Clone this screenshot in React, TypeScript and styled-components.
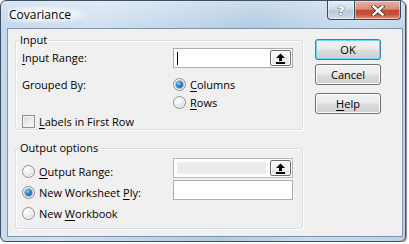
import styled, { createGlobalStyle } from "styled-components";

const UI_FONT = `"Open Sans", "Noto Sans", "DejaVu Sans", sans-serif`;

const GlobalStyle = createGlobalStyle`
  html, body {
    margin: 0;
    padding: 0;
    background: #ffffff;
  }
  body {
    font-family: ${UI_FONT};
    font-size: 11px;
    color: #000000;
  }
  * {
    box-sizing: border-box;
  }
`;

const Window = styled.div`
  width: 406px;
  height: 242px;
  display: flex;
  flex-direction: column;
  border: 1px solid #3f5063;
  border-radius: 6px;
  background: linear-gradient(
      180deg,
      rgba(255, 255, 255, 0.35) 0%,
      rgba(255, 255, 255, 0) 12%
    ),
    linear-gradient(
      100deg,
      #c2d7ec 0%,
      #d0e0f0 22%,
      #bdd2e8 45%,
      #b0c9e2 58%,
      #c7daee 78%,
      #bcd2e9 100%
    );
  box-shadow: 1px 1px 1px rgba(0, 0, 0, 0.45);
`;

const TitleBar = styled.div`
  height: 27px;
  display: flex;
  justify-content: space-between;
  align-items: flex-start;
  padding: 0 4px 0 7px;
`;

const Title = styled.span`
  margin-top: 5px;
  padding: 1px 16px 1px 1px;
  font-size: 12px;
  line-height: 15px;
  background: radial-gradient(
    ellipse at 40% 50%,
    rgba(255, 255, 255, 0.8) 35%,
    rgba(255, 255, 255, 0) 78%
  );
`;

const CaptionButtons = styled.div`
  display: flex;
`;

const CaptionButton = styled.div<{ $variant: "help" | "close" }>`
  width: ${(p) => (p.$variant === "close" ? "46px" : "28px")};
  height: 19px;
  display: flex;
  align-items: center;
  justify-content: center;
  border: 1px solid #3b4b5e;
  border-top: none;
  border-left-width: ${(p) => (p.$variant === "close" ? "0" : "1px")};
  border-radius: ${(p) =>
    p.$variant === "close" ? "0 0 4px 0" : "0 0 0 4px"};
  box-shadow: inset 0 0 0 1px rgba(255, 255, 255, 0.45);
  background: ${(p) =>
    p.$variant === "close"
      ? "linear-gradient(180deg, #e8b1a5 0%, #d98c78 45%, #c6472f 52%, #c9503a 75%, #e29378 100%)"
      : "linear-gradient(180deg, #e4ebf3 0%, #d1dce8 45%, #b8c8da 52%, #c2d2e3 80%, #d6e2ee 100%)"};
`;

const HelpGlyph = styled.span`
  font-family: "DejaVu Sans", sans-serif;
  font-weight: bold;
  font-size: 13px;
  line-height: 13px;
  color: #ffffff;
  -webkit-text-stroke: 0.7px #3a4656;
  paint-order: stroke fill;
`;

const Client = styled.div`
  flex: 1;
  margin: 0 2px 4px 6px;
  border: 1px solid #8193a7;
  background: #f0f0f0;
  display: flex;
  gap: 12px;
  padding: 10px 0 0 7px;
`;

const Groups = styled.div`
  width: 288px;
  padding-top: 1px;
  display: flex;
  flex-direction: column;
  gap: 18px;
`;

const Group = styled.div`
  position: relative;
  border: 1px solid #d5dfe5;
  border-radius: 3px;
  box-shadow: inset 1px 1px 0 #ffffff, 1px 1px 0 #ffffff;
`;

const Legend = styled.span`
  position: absolute;
  top: -9px;
  left: 3px;
  padding: 0 1px;
  background: #f0f0f0;
  line-height: 15px;
`;

const InputGrid = styled.div`
  display: grid;
  grid-template-columns: 151px 120px;
  padding: 7px 0 0 6px;
`;

const OutputGrid = styled.div`
  display: grid;
  grid-template-columns: 151px 120px;
  padding: 0 0 4px 6px;
`;

const Label = styled.div<{ $mt?: number }>`
  height: 20px;
  line-height: 20px;
  margin-top: ${(p) => p.$mt ?? 0}px;
  white-space: nowrap;
`;

const RadioList = styled.div<{ $top: number }>`
  display: flex;
  flex-direction: column;
  padding-top: ${(p) => p.$top}px;
`;

const FieldList = styled.div`
  display: flex;
  flex-direction: column;
  gap: 2px;
  padding-top: 9px;
`;

const OptionRow = styled.label<{ $h: number }>`
  height: ${(p) => p.$h}px;
  display: flex;
  align-items: center;
  gap: 4px;
  white-space: nowrap;
`;

const RadioMark = styled.span<{ $checked?: boolean }>`
  width: 13px;
  height: 13px;
  flex: none;
  border-radius: 50%;
  border: 1px solid #8e8f8f;
  display: flex;
  align-items: center;
  justify-content: center;
  background: radial-gradient(
    circle at 35% 30%,
    #ffffff 0%,
    #f2f2f2 35%,
    #d3d3d3 100%
  );
  box-shadow: inset 0 0 0 1px rgba(255, 255, 255, 0.6);

  &::after {
    content: "";
    display: ${(p) => (p.$checked ? "block" : "none")};
    width: 7px;
    height: 7px;
    border-radius: 50%;
    background: radial-gradient(
      circle at 40% 35%,
      #8fd4ff 0%,
      #2a8ad4 40%,
      #0d4f86 100%
    );
    box-shadow: 0 0 0 1px rgba(30, 90, 140, 0.35);
  }
`;

const CheckMark = styled.span`
  width: 13px;
  height: 13px;
  flex: none;
  border: 1px solid #8e8f8f;
  background: linear-gradient(135deg, #d2d5da 0%, #ececec 55%, #f9f9f9 100%);
  box-shadow: inset 0 0 0 1px #f4f4f4;
`;

const CheckRow = styled(OptionRow)`
  grid-column: 1 / 3;
  margin-top: 2px;
`;

const RangeBox = styled.div<{ $disabled?: boolean }>`
  height: 20px;
  display: flex;
  align-items: stretch;
  padding: 1px;
  border: 1px solid ${(p) => (p.$disabled ? "#b5b8bd" : "#abadb3")};
  background: #ffffff;
`;

const Field = styled.div<{ $disabled?: boolean }>`
  flex: 1;
  margin: ${(p) => (p.$disabled ? "2px 4px 2px 2px" : "0")};
  padding-left: 2px;
  display: flex;
  align-items: center;
  background: ${(p) => (p.$disabled ? "#ebebeb" : "#ffffff")};
`;

const Caret = styled.span`
  width: 1px;
  height: 13px;
  background: #000000;
`;

const PlainBox = styled.div`
  height: 20px;
  border: 1px solid #abadb3;
  background: #ffffff;
`;

const CollapseButton = styled.div`
  width: 21px;
  display: flex;
  align-items: center;
  justify-content: center;
  border: 1px solid #707070;
  border-radius: 2px;
  background: linear-gradient(180deg, #fbfbfb 0%, #f0f0f0 50%, #e3e3e3 100%);
  box-shadow: inset 0 0 0 1px #ffffff;
`;

const ButtonColumn = styled.div`
  width: 66px;
  display: flex;
  flex-direction: column;
`;

const DialogButton = styled.div<{ $default?: boolean; $gap?: number }>`
  height: 21px;
  margin-top: ${(p) => p.$gap ?? 0}px;
  display: flex;
  align-items: center;
  justify-content: center;
  border: 1px solid ${(p) => (p.$default ? "#3c7fb1" : "#707070")};
  border-radius: 3px;
  background: linear-gradient(
    180deg,
    #f2f2f2 0%,
    #ebebeb 48%,
    #dddddd 52%,
    #cfcfcf 100%
  );
  box-shadow: inset 0 0 0 1px
    ${(p) => (p.$default ? "#6ad6f8" : "#fcfcfc")};
`;

const U = styled.u`
  text-decoration-thickness: 1px;
  text-underline-offset: 2px;
`;

function UpArrow() {
  return (
    <svg width="11" height="11" viewBox="0 0 11 11">
      <path d="M5.5 0.5 L10 5 H7 V8 H4 V5 H1 Z" fill="#000000" />
      <rect x="1" y="9" width="9" height="2" fill="#000000" />
    </svg>
  );
}

function CloseGlyph() {
  return (
    <svg width="14" height="11" viewBox="0 0 14 11">
      <path
        d="M2.5 1.5 L11.5 9.5 M11.5 1.5 L2.5 9.5"
        stroke="#4a3a36"
        strokeWidth="4.2"
        strokeLinecap="square"
      />
      <path
        d="M2.5 1.5 L11.5 9.5 M11.5 1.5 L2.5 9.5"
        stroke="#ffffff"
        strokeWidth="2.4"
        strokeLinecap="square"
      />
    </svg>
  );
}

function RangeInput({ disabled, focused }: { disabled?: boolean; focused?: boolean }) {
  return (
    <RangeBox $disabled={disabled}>
      <Field $disabled={disabled}>{focused && <Caret />}</Field>
      <CollapseButton>
        <UpArrow />
      </CollapseButton>
    </RangeBox>
  );
}

export default function App() {
  return (
    <>
      <GlobalStyle />
      <Window>
        <TitleBar>
          <Title>Covariance</Title>
          <CaptionButtons>
            <CaptionButton $variant="help">
              <HelpGlyph>?</HelpGlyph>
            </CaptionButton>
            <CaptionButton $variant="close">
              <CloseGlyph />
            </CaptionButton>
          </CaptionButtons>
        </TitleBar>

        <Client>
          <Groups>
            <Group>
              <Legend>Input</Legend>
              <InputGrid>
                <Label>
                  <U>I</U>nput Range:
                </Label>
                <RangeInput focused />

                <Label $mt={7}>Grouped By:</Label>
                <RadioList $top={7}>
                  <OptionRow $h={18}>
                    <RadioMark $checked />
                    <span>
                      <U>C</U>olumns
                    </span>
                  </OptionRow>
                  <OptionRow $h={18}>
                    <RadioMark />
                    <span>
                      <U>R</U>ows
                    </span>
                  </OptionRow>
                </RadioList>

                <CheckRow $h={16}>
                  <CheckMark />
                  <span>
                    <U>L</U>abels in First Row
                  </span>
                </CheckRow>
              </InputGrid>
            </Group>

            <Group>
              <Legend>Output options</Legend>
              <OutputGrid>
                <RadioList $top={12}>
                  <OptionRow $h={21}>
                    <RadioMark />
                    <span>
                      <U>O</U>utput Range:
                    </span>
                  </OptionRow>
                  <OptionRow $h={21}>
                    <RadioMark $checked />
                    <span>
                      New Worksheet <U>P</U>ly:
                    </span>
                  </OptionRow>
                  <OptionRow $h={21}>
                    <RadioMark />
                    <span>
                      New <U>W</U>orkbook
                    </span>
                  </OptionRow>
                </RadioList>
                <FieldList>
                  <RangeInput disabled />
                  <PlainBox />
                </FieldList>
              </OutputGrid>
            </Group>
          </Groups>

          <ButtonColumn>
            <DialogButton $default>OK</DialogButton>
            <DialogButton $gap={4}>Cancel</DialogButton>
            <DialogButton $gap={8}>
              <span>
                <U>H</U>elp
              </span>
            </DialogButton>
          </ButtonColumn>
        </Client>
      </Window>
    </>
  );
}
